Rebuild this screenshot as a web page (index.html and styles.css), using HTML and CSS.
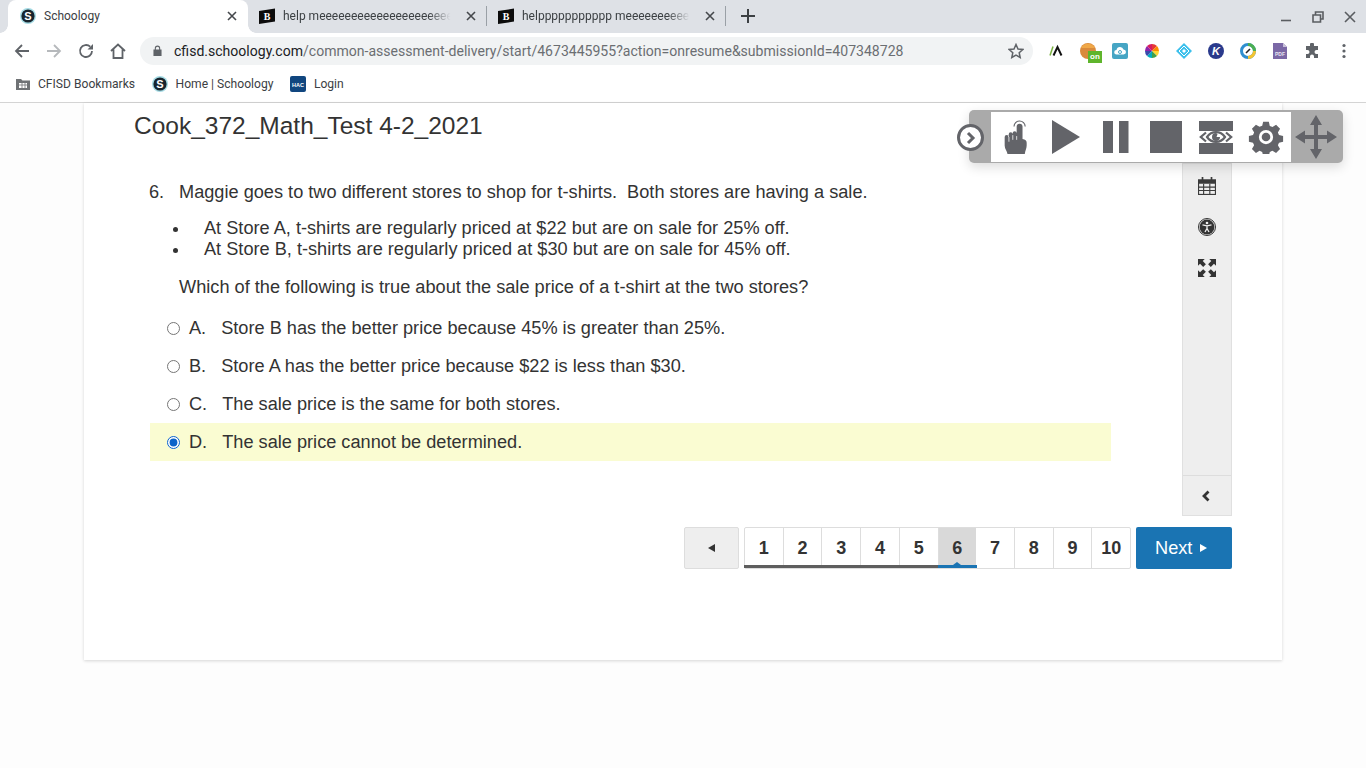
FILE: index.html
```html
<!DOCTYPE html>
<html lang="en">
<head>
<meta charset="utf-8">
<title>Schoology</title>
<link rel="stylesheet" href="styles.css">
</head>
<body>
<header class="chrome">
  <div class="tabstrip">
    <div class="tab active">
      <svg class="fav" viewBox="0 0 16 16"><circle cx="8" cy="8" r="8" fill="#a5dbe4"/><circle cx="8" cy="8" r="6.6" fill="#17242e"/><text x="8" y="11.6" class="fav-s">S</text></svg>
      <span class="tab-title">Schoology</span>
      <svg class="x" viewBox="0 0 10 10"><path d="M1 1l8 8M9 1l-8 8"/></svg>
    </div>
    <div class="tab">
      <svg class="fav" viewBox="0 0 16 16"><path d="M0 3l16-2.500v13L0 16z" fill="#0c0c0c"/><text x="8" y="11.800" class="fav-b">B</text></svg>
      <span class="tab-title fade">help meeeeeeeeeeeeeeeeeeeee</span>
      <svg class="x" viewBox="0 0 10 10"><path d="M1 1l8 8M9 1l-8 8"/></svg>
    </div>
    <div class="tab">
      <svg class="fav" viewBox="0 0 16 16"><path d="M0 3l16-2.500v13L0 16z" fill="#0c0c0c"/><text x="8" y="11.800" class="fav-b">B</text></svg>
      <span class="tab-title fade">helppppppppppp meeeeeeeeee</span>
      <svg class="x" viewBox="0 0 10 10"><path d="M1 1l8 8M9 1l-8 8"/></svg>
    </div>
    <svg class="newtab" viewBox="0 0 14 14"><path d="M7 0v14M0 7h14"/></svg>
    <div class="winctl">
      <svg viewBox="0 0 12 12"><path d="M1 9.500h10" class="w2"/></svg>
      <svg viewBox="0 0 12 12"><path d="M3.500 3.500V1h7.500v7H8.500M1 4h7.500v7H1z" class="w2"/></svg>
      <svg viewBox="0 0 12 12"><path d="M1 1l10 10M11 1L1 11" class="w2"/></svg>
    </div>
  </div>
  <div class="toolbar">
    <svg class="nav" viewBox="0 0 16 16"><path d="M15 8H2M8 2L2 8l6 6"/></svg>
    <svg class="nav off" viewBox="0 0 16 16"><path d="M1 8h13M8 2l6 6-6 6"/></svg>
    <svg class="nav" viewBox="0 0 16 16"><path d="M14 8a6 6 0 1 1-1.800-4.300"/><path class="solid" d="M15 1v5.500H9.500z"/></svg>
    <svg class="nav" viewBox="0 0 16 16"><path d="M1 8l7-6.500L15 8M3.500 6.500V15h9V6.500"/></svg>
    <div class="omnibox">
      <svg class="lock" viewBox="0 0 10 12"><path d="M2 5V3.500a3 3 0 0 1 6 0V5h1.500v7h-9V5zM3.200 5h3.600V3.500a1.800 1.800 0 0 0-3.600 0z"/></svg>
      <span class="url"><b>cfisd.schoology.com</b>/common-assessment-delivery/start/4673445955?action=onresume&amp;submissionId=407348728</span>
      <svg class="star" viewBox="0 0 16 16"><path d="M8 1.500l2 4.500 4.800.5-3.600 3.200 1 4.800L8 12.100l-4.200 2.400 1-4.800L1.200 6.500 6 6z"/></svg>
    </div>
    <div class="exts">
      <svg viewBox="0 0 16 16"><path d="M2 12.500L5 3.500" stroke="#7cb342" stroke-width="1.500" fill="none"/><path d="M5.500 12.500L9.500 4 13.500 12.500" stroke="#111" stroke-width="2" fill="none"/></svg>
      <span class="ext-on"><svg viewBox="0 0 16 16"><circle cx="8" cy="8" r="8" fill="#d98a3c"/><path d="M1 5a8 8 0 0 1 14 0z" fill="#f0a848"/></svg><i class="on">on</i></span>
      <svg viewBox="0 0 16 16"><rect width="16" height="16" rx="2" fill="#46a5c4"/><path d="M4.500 11.500a2.300 2.300 0 0 1 0-4.600 3.600 3.600 0 0 1 7-.4 2.500 2.500 0 0 1 0 5z" fill="#fff"/><circle cx="8" cy="9" r="1.500" fill="none" stroke="#46a5c4"/></svg>
      <svg viewBox="0 0 16 16"><path d="M8 8V1a7 7 0 0 1 5 2z" fill="#e53935"/><path d="M8 8l5-5a7 7 0 0 1 2 5z" fill="#fb8c00"/><path d="M8 8h7a7 7 0 0 1-2 5z" fill="#fdd835"/><path d="M8 8l5 5a7 7 0 0 1-5 2z" fill="#43a047"/><path d="M8 8v7a7 7 0 0 1-5-2z" fill="#00acc1"/><path d="M8 8l-5 5a7 7 0 0 1-2-5z" fill="#3949ab"/><path d="M8 8H1a7 7 0 0 1 2-5z" fill="#8e24aa"/><path d="M8 8L3 3a7 7 0 0 1 5-2z" fill="#d81b60"/></svg>
      <svg viewBox="0 0 16 16"><path d="M8 0l8 8-8 8-8-8z" fill="#3cc0ec"/><path d="M8 3l5 5-5 5-5-5z" fill="none" stroke="#fff"/><path d="M8 6l2 2-2 2-2-2z" fill="#fff"/></svg>
      <svg viewBox="0 0 16 16"><circle cx="8" cy="8" r="8" fill="#2a3a8c"/><text x="8" y="12" class="ext-k">K</text></svg>
      <svg viewBox="0 0 16 16"><circle cx="8" cy="8" r="6.500" fill="#fff" stroke="#2f8fd0" stroke-width="3"/><path d="M8 1.500a6.500 6.500 0 0 1 6.500 6.500" fill="none" stroke="#4caf50" stroke-width="3"/><path d="M14.500 8A6.500 6.500 0 0 1 8 14.500" fill="none" stroke="#f4c430" stroke-width="3"/><path d="M6 10l4-4" stroke="#222" stroke-width="1.600"/></svg>
      <svg viewBox="0 0 16 16"><path d="M1 0h10l4 4v12H1z" fill="#7b68a6"/><path d="M11 0l4 4h-4z" fill="#c9c2da"/><text x="8" y="12.500" class="ext-pdf">PDF</text></svg>
      <svg viewBox="0 0 16 16"><path fill="#5f6368" d="M6 1.500a2 2 0 0 1 4 0V3h4v4h-1.500a2 2 0 0 0 0 4H14v4h-4v-1.500a2 2 0 0 0-4 0V15H2v-4h1.500a2 2 0 0 0 0-4H2V3h4z"/></svg>
      <svg viewBox="0 0 16 16"><circle cx="8" cy="2.500" r="1.600" fill="#5f6368"/><circle cx="8" cy="8" r="1.600" fill="#5f6368"/><circle cx="8" cy="13.500" r="1.600" fill="#5f6368"/></svg>
    </div>
  </div>
  <div class="bookmarks">
    <div class="bm"><svg class="bm-ico" viewBox="0 0 14 12"><path d="M0 1h5l1.500 1.500H14V12H0z" fill="#6f7275"/><path d="M3 5h8v5H3z" fill="#fff"/><path d="M3 7h8M6 5v5M9 5v5" stroke="#6f7275" stroke-width=".8"/></svg><span>CFISD Bookmarks</span></div>
    <div class="bm"><svg class="bm-ico2" viewBox="0 0 16 16"><circle cx="8" cy="8" r="8" fill="#a5dbe4"/><circle cx="8" cy="8" r="6.600" fill="#17242e"/><text x="8" y="11.600" class="fav-s">S</text></svg><span>Home | Schoology</span></div>
    <div class="bm"><svg class="bm-ico2" viewBox="0 0 16 16"><rect width="16" height="16" rx="2" fill="#10467f"/><text x="8" y="10.500" class="hac">HAC</text></svg><span>Login</span></div>
  </div>
</header>

<main class="page">
  <section class="card">
    <h1 class="test-title">Cook_372_Math_Test 4-2_2021</h1>
    <div class="work">
      <div class="question">
        <div class="stem">
          <span class="qnum">6.</span>
          <div class="qbody">
            <p class="lead">Maggie goes to two different stores to shop for t-shirts.&nbsp; Both stores are having a sale.</p>
            <ul class="facts">
              <li>At Store A, t-shirts are regularly priced at $22 but are on sale for 25% off.</li>
              <li>At Store B, t-shirts are regularly priced at $30 but are on sale for 45% off.</li>
            </ul>
            <p class="ask">Which of the following is true about the sale price of a t-shirt at the two stores?</p>
          </div>
        </div>
        <div class="options">
          <label class="opt"><input type="radio" name="a"><span class="letter">A.</span>Store B has the better price because 45% is greater than 25%.</label>
          <label class="opt"><input type="radio" name="a"><span class="letter">B.</span>Store A has the better price because $22 is less than $30.</label>
          <label class="opt"><input type="radio" name="a"><span class="letter">C.</span>The sale price is the same for both stores.</label>
          <label class="opt selected"><input type="radio" name="a" checked><span class="letter">D.</span>The sale price cannot be determined.</label>
        </div>
      </div>
      <aside class="side">
        <div class="side-tools">
          <svg viewBox="0 0 16 16"><path d="M0 2h16v14H0z" fill="#3b3b3b"/><path d="M1 6h14v9H1z" fill="#eee"/><path d="M0 9h16M0 12h16M5 6v10M10.500 6v10" stroke="#3b3b3b"/><path d="M4 0v3M12 0v3" stroke="#3b3b3b" stroke-width="1.500"/></svg>
          <svg viewBox="0 0 18 18"><circle cx="9" cy="9" r="8.500" fill="#eee" stroke="#333"/><circle cx="9" cy="9" r="7.400" fill="#333"/><circle cx="9" cy="5" r="1.300" fill="#eee"/><path d="M4.500 6.800L9 7.800l4.500-1M9 7.800v3M9 10.500l-2 3.500M9 10.500l2 3.500" stroke="#eee" stroke-width="1.300" fill="none"/></svg>
          <svg viewBox="0 0 16 16"><path d="M0 0h6L4.200 1.800 7 4.600 4.600 7 1.800 4.200 0 6zM16 0v6l-1.800-1.800L11.400 7 9 4.600l2.800-2.800L10 0zM0 16v-6l1.800 1.800L4.600 9 7 11.400l-2.800 2.800L6 16zM16 16h-6l1.800-1.800L9 11.400 11.400 9l2.800 2.800L16 10z" fill="#333"/></svg>
        </div>
        <div class="side-collapse"><svg viewBox="0 0 8 12"><path d="M6.500 1.500L2 6l4.500 4.500" fill="none" stroke="#333" stroke-width="2.800"/></svg></div>
      </aside>
    </div>
    <nav class="pager">
      <button class="prev"><i class="tri-left"></i></button>
      <div class="pages">
        <span class="pg done">1</span><span class="pg done">2</span><span class="pg done">3</span><span class="pg done">4</span><span class="pg done">5</span><span class="pg current">6</span><span class="pg">7</span><span class="pg">8</span><span class="pg">9</span><span class="pg">10</span>
      </div>
      <button class="next">Next<i class="tri-right"></i></button>
    </nav>
  </section>
</main>

<div class="tts">
  <div class="tts-icons">
    <svg viewBox="0 0 24 36"><path fill="#636469" d="M12.700 7a3.100 3.100 0 0 1 6.200 0v13c3 .5 4.400 1.500 4.400 4v3c0 3-1.500 5-2 9H3c-.3-3-3-5-3-9v-9a2.100 2.100 0 0 1 4.300 0v-3a2.100 2.100 0 0 1 4.200 0v-1a2.100 2.100 0 0 1 4.200 0z"/><path d="M4.500 18v5M8.600 16v5M12.700 17v4" stroke="#fff" stroke-width=".8" fill="none"/><path d="M9.900 7a5.900 5.900 0 0 1 11.800 0" fill="none" stroke="#636469" stroke-width="1.200"/></svg>
    <svg viewBox="0 0 34 34"><path fill="#636469" d="M3 0l28 17L3 34z"/></svg>
    <svg viewBox="0 0 34 34"><path fill="#636469" d="M4 1h10v32H4zM20 1h9.500v32H20z"/></svg>
    <svg viewBox="0 0 34 34"><path fill="#636469" d="M1 1h32v32H1z"/></svg>
    <svg viewBox="0 0 34 34"><path fill="#636469" d="M0 1h34v10H0zM0 23h34v11H0z"/><path fill="none" stroke="#636469" stroke-width="2.200" d="M7 12.500L1.800 17 7 21.500M27 12.500L32.200 17 27 21.500M8 17c4.500-6.500 13.500-6.500 18 0-4.500 6.500-13.500 6.500-18 0z"/><path fill="#636469" d="M17 13a4 4 0 1 0 4 4h-3.500l1-2.800A4 4 0 0 0 17 13z"/></svg>
    <svg viewBox="0 0 34 34"><path fill="#636469" fill-rule="evenodd" d="M14 1h6l1 4.300 2.800 1.200 3.800-2.300 4.200 4.200-2.300 3.800 1.200 2.800 4.300 1v6l-4.300 1-1.200 2.800 2.300 3.800-4.200 4.200-3.800-2.300-2.800 1.200-1 4.300h-6l-1-4.300-2.800-1.200-3.800 2.300-4.200-4.200 2.300-3.800-1.200-2.800-4.300-1v-6l4.300-1 1.200-2.800L2.200 8.200l4.200-4.200 3.800 2.300L13 5.100zM17 9.500a7.500 7.500 0 1 0 0 15 7.500 7.500 0 0 0 0-15z" transform="translate(.85 .85) scale(.95)"/><circle cx="17" cy="17" r="4.300" fill="#636469"/></svg>
  </div>
  <div class="tts-move">
    <svg viewBox="0 0 42 44"><path fill="#636469" d="M21 0l6 10h-4v10h9v-4.500L42 22l-10 6.500V24h-9v10h4l-6 10-6-10h4V24h-9v4.500L0 22l10-6.500V20h9V10h-4z"/></svg>
  </div>
  <div class="tts-toggle"><svg viewBox="0 0 10 14"><path d="M2 2l5 5-5 5" fill="none" stroke="#636469" stroke-width="3"/></svg></div>
</div>
</body>
</html>
```

FILE: styles.css
```css
* { box-sizing: border-box; }
html, body { margin: 0; height: 100%; }
body { width: 1366px; height: 768px; overflow: hidden; background: #fdfdfd; font-family: "Liberation Sans", Arial, sans-serif; color: #333; display: flex; flex-direction: column; }

.chrome { font-family: Roboto, "Liberation Sans", sans-serif; flex: none; height: 103px; background: #fff; border-bottom: 1px solid #d4d4d4; }
.tabstrip { height: 33px; background: #dee1e6; display: flex; align-items: center; padding-left: 8px; }
.tab { width: 239px; height: 33px; display: flex; align-items: center; padding: 0 11px 2px 11px; gap: 8px; font-size: 12px; color: #3c4043; position: relative; }
.tab + .tab::after { content: ""; position: absolute; right: 0; top: 6px; height: 20px; width: 1px; background: #9aa0a6; }
.tab.active { width: 240px; padding-left: 12px; background: #fff; border-radius: 8px 8px 0 0; }
.tab.active::before, .tab.active::after { content: ""; position: absolute; bottom: 0; width: 8px; height: 8px; }
.tab.active::before { left: -8px; background: radial-gradient(circle at 0 0, transparent 7.500px, #fff 8px); }
.tab.active::after { right: -8px; background: radial-gradient(circle at 100% 0, transparent 7.500px, #fff 8px); }
.fav { width: 16px; height: 16px; flex: none; }
.fav-s { font: 700 11px "Liberation Sans", sans-serif; fill: #fff; text-anchor: middle; }
.fav-b { font: 900 10px "Liberation Serif", serif; fill: #fff; text-anchor: middle; }
.tab-title { flex: 1; white-space: nowrap; overflow: hidden; }
.fade { -webkit-mask-image: linear-gradient(90deg, #000 85%, transparent 98%); mask-image: linear-gradient(90deg, #000 85%, transparent 98%); }
.x { width: 10px; height: 10px; flex: none; fill: none; stroke: #45484c; stroke-width: 1.6; margin: 0 0 0 4px; }
.newtab { width: 14px; height: 14px; margin: 0 0 2px 15px; fill: none; stroke: #3c4043; stroke-width: 2; }
.winctl { margin-left: auto; display: flex; gap: 20px; padding-right: 10px; }
.winctl svg { width: 12px; height: 12px; }
.w2 { fill: none; stroke: #5a5d61; stroke-width: 1.6; }

.toolbar { height: 35px; display: flex; align-items: center; padding-left: 14px; }
.nav { width: 16px; height: 16px; margin-right: 16px; fill: none; stroke: #5f6368; stroke-width: 1.800; }
.nav.off { stroke: #b6b9bc; }
.nav .solid { fill: #5f6368; stroke: none; }
.omnibox { width: 893px; height: 28px; margin-left: -2px; border-radius: 14px; background: #f1f3f4; display: flex; align-items: center; padding: 0 9px 0 13px; font-size: 14.060px; color: #6b6e72; }
.lock { width: 9px; height: 11px; fill: #5f6368; flex: none; margin-right: 12px; }
.url { flex: 1; white-space: nowrap; }
.url b { font-weight: 400; color: #202124; }
.star { width: 16px; height: 16px; fill: none; stroke: #5f6368; stroke-width: 1.500; }
.exts { display: flex; align-items: center; gap: 16px; padding-left: 15px; }
.exts svg { width: 16px; height: 16px; display: block; flex: none; }
.ext-on { position: relative; display: block; width: 16px; height: 16px; }
.on { position: absolute; left: 8px; top: 8px; width: 14px; height: 12px; background: #5fb52c; color: #fff; font: 700 8px/12px "Liberation Sans", sans-serif; text-align: center; }
.ext-k { font: italic 700 11px "Liberation Sans", sans-serif; fill: #fff; text-anchor: middle; }
.ext-pdf { font: 700 5px "Liberation Sans", sans-serif; fill: #e8e4f0; text-anchor: middle; }

.bookmarks { height: 34px; display: flex; align-items: center; padding: 0 0 2px 16px; gap: 16.500px; font-size: 12.100px; color: #3c4043; }
.bm { display: flex; align-items: center; gap: 8px; }
.bm-ico { width: 14px; height: 12px; margin-right: 0; }
.bm-ico2 { width: 16px; height: 16px; }
.hac { font: 700 5.500px "Liberation Sans", sans-serif; fill: #fff; text-anchor: middle; }

.page { flex: 1; padding: 0 84px; min-height: 0; }
.card { height: 557px; background: #fff; box-shadow: 0 1px 3px rgba(0,0,0,.16); padding: 0 50px; display: flex; flex-direction: column; }
.test-title { margin: 8px 0 0; font-size: 24.500px; line-height: 30px; font-weight: 400; color: #333; height: 52px; }
.work { display: flex; height: 356px; }
.question { flex: 1; padding: 0 0 0 16px; font-size: 18.180px; color: #333; line-height: 21px; }
.stem { display: flex; margin-top: 19px; }
.qnum { width: 29px; margin-left: -1px; flex: none; margin-right: 1px; }
.qbody { flex: 1; }
.lead { margin: 0; }
.facts { margin: 15px 0 17px; padding: 0; list-style: none; }
.facts li { display: flex; margin-left: -6px; }
.facts li::before { content: ""; width: 5px; height: 5px; flex: none; margin: 9px 26px 0 0; border-radius: 50%; background: #333; }
.ask { margin: 0; }
.options { margin: 11px 71px 0 0; }
.opt { display: flex; align-items: center; height: 38px; padding-left: 17px; }
.opt input { width: 13px; height: 13px; margin: 0 9px 0 0; accent-color: #0b63c9; }
.opt.selected { background: #fafcd2; }
.letter { margin-right: 15px; }
.side { width: 50px; flex: none; background: #eee; border: 1px solid #e0e0e0; display: flex; flex-direction: column; margin-bottom: 3px; }
.side-tools { flex: 1; display: flex; flex-direction: column; align-items: center; padding-top: 13px; gap: 23px; }
.side-tools svg { width: 18px; height: 18px; display: block; }
.side-collapse { height: 40px; border-top: 1px solid #ddd; display: flex; align-items: center; justify-content: center; padding-right: 2px; }
.side-collapse svg { width: 10px; height: 12px; }

.pager { display: flex; justify-content: flex-end; gap: 5px; margin-top: 8px; height: 42px; }
.prev, .next { border: 0; font: inherit; padding: 0; cursor: pointer; border-radius: 2px; display: flex; align-items: center; }
.prev { width: 55px; background: #eee; border: 1px solid #ddd; justify-content: center; }
.tri-left { width: 0; height: 0; border: 4.500px solid transparent; border-left: 0; border-right: 7px solid #333; }
.pages { display: flex; width: 387px; border: 1px solid #ddd; border-radius: 2px; }
.pg { flex: 1; display: flex; align-items: center; justify-content: center; font-weight: 700; font-size: 18px; color: #333; border-right: 1px solid #ddd; position: relative; }
.pg:last-child { border-right: 0; }
.pg.done::after, .pg.current::after { content: ""; position: absolute; left: -1px; right: -1px; bottom: 0; height: 3px; background: #5e5e5e; }
.pg.current { background: #d9d9d9; border-right: 0; }
.pg.current::after { background: #1a74b3; }
.pg.current::before { content: ""; position: absolute; bottom: 3px; left: 50%; margin-left: -4px; border: 4px solid transparent; border-top: 0; border-bottom: 3px solid #1a74b3; }
.next { width: 96px; background: #1a74b3; color: #fff; font-size: 18.200px; gap: 8px; padding-left: 19px; }
.tri-right { width: 0; height: 0; border: 4px solid transparent; border-right: 0; border-left: 7px solid #fff; }

.tts { position: absolute; left: 969px; top: 110px; width: 374px; height: 53px; background: #aaa; border-radius: 5px; box-shadow: 0 4px 12px rgba(0,0,0,.14); padding: 2px 0 1px 22px; display: flex; }
.tts-icons { width: 300px; background: #fff; display: flex; }
.tts-icons svg { width: 50px; height: 34px; margin-top: 8px; display: block; }
.tts-move { flex: 1; display: flex; align-items: center; justify-content: center; padding-right: 2px; }
.tts-move svg { width: 42px; height: 44px; }
.tts-toggle { position: absolute; left: -12px; top: 14px; width: 27px; height: 27px; background: #fff; border: 3px solid #636469; border-radius: 50%; display: flex; align-items: center; justify-content: center; }
.tts-toggle svg { width: 10px; height: 14px; }
```
